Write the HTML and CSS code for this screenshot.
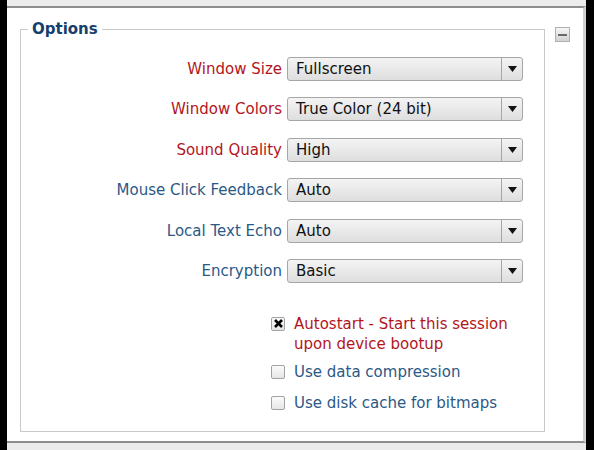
FILE: index.html
```html
<!DOCTYPE html>
<html>
<head>
<meta charset="utf-8">
<link rel="stylesheet" href="styles.css">
</head>
<body>
<div class="frame">
  <div class="topband"></div>
  <div class="main">
    <fieldset class="options">
      <legend>Options</legend>
      <div class="grid">
        <label class="lbl req">Window Size</label>
        <div class="select"><span class="val">Fullscreen</span><span class="arrow"><svg width="9" height="6" viewBox="0 0 9 6"><path d="M0 0H9L4.5 6Z" fill="#111"/></svg></span></div>
        <label class="lbl req">Window Colors</label>
        <div class="select"><span class="val">True Color (24 bit)</span><span class="arrow"><svg width="9" height="6" viewBox="0 0 9 6"><path d="M0 0H9L4.5 6Z" fill="#111"/></svg></span></div>
        <label class="lbl req">Sound Quality</label>
        <div class="select"><span class="val">High</span><span class="arrow"><svg width="9" height="6" viewBox="0 0 9 6"><path d="M0 0H9L4.5 6Z" fill="#111"/></svg></span></div>
        <label class="lbl">Mouse Click Feedback</label>
        <div class="select"><span class="val">Auto</span><span class="arrow"><svg width="9" height="6" viewBox="0 0 9 6"><path d="M0 0H9L4.5 6Z" fill="#111"/></svg></span></div>
        <label class="lbl">Local Text Echo</label>
        <div class="select"><span class="val">Auto</span><span class="arrow"><svg width="9" height="6" viewBox="0 0 9 6"><path d="M0 0H9L4.5 6Z" fill="#111"/></svg></span></div>
        <label class="lbl">Encryption</label>
        <div class="select"><span class="val">Basic</span><span class="arrow"><svg width="9" height="6" viewBox="0 0 9 6"><path d="M0 0H9L4.5 6Z" fill="#111"/></svg></span></div>
      </div>
      <div class="checks">
        <div class="check req first">
          <span class="box"><svg width="11" height="11" viewBox="0 0 11 11"><path d="M2 2L9 9M9 2L2 9" stroke="#000" stroke-width="2.6"/></svg></span>
          <span class="ctext">Autostart - Start this session<br>upon device bootup</span>
        </div>
        <div class="check second">
          <span class="box"></span>
          <span class="ctext">Use data compression</span>
        </div>
        <div class="check third">
          <span class="box"></span>
          <span class="ctext">Use disk cache for bitmaps</span>
        </div>
      </div>
    </fieldset>
    <div class="collapse"><span class="dash"></span></div>
  </div>
  <div class="bottomband"></div>
</div>
</body>
</html>
```

FILE: styles.css
```css
html, body {
  margin: 0;
  padding: 0;
  background: #000;
}
body {
  width: 594px;
  height: 450px;
  overflow: hidden;
  font-family: "DejaVu Sans", sans-serif;
  font-size: 15px;
}
.frame {
  margin-left: 7px;
  width: 579px;
  height: 450px;
  background: #fff;
  display: flex;
  flex-direction: column;
}
.topband {
  height: 6px;
  background: #ececec;
}
.main {
  border-top: 2px solid #8e8e8e;
  border-bottom: 2px solid #8e8e8e;
  border-right: 3px solid #cfcfcf;
  box-sizing: border-box;
  height: 437px;
  display: flex;
  align-items: flex-start;
}
.bottomband {
  flex: 1;
  background: #ececec;
}
.options {
  margin: 12px 0 0 13px;
  width: 525px;
  height: 412px;
  box-sizing: border-box;
  border: 1px solid #c8c8c8;
  padding: 19px 21px 0 0;
}
legend {
  margin-left: 7px;
  padding: 0 4px;
  font-weight: bold;
  font-size: 15px;
  color: #173f6c;
}
.grid {
  display: grid;
  grid-template-columns: 261px 236px;
  column-gap: 5px;
  row-gap: 16.4px;
  align-items: center;
}
.lbl {
  text-align: right;
  color: #2b5986;
  white-space: nowrap;
}
.lbl.req {
  color: #b3151c;
}
.select {
  height: 24px;
  box-sizing: border-box;
  border: 1px solid #a6a6a6;
  border-radius: 3px;
  background: linear-gradient(#f4f4f4, #dedede);
  display: flex;
  align-items: center;
  color: #111;
}
.val {
  flex: 1;
  padding-left: 8px;
}
.arrow {
  width: 20px;
  height: 100%;
  border-left: 1px solid #a6a6a6;
  display: flex;
  align-items: center;
  justify-content: center;
}
.checks {
  margin-top: 31px;
  padding-left: 250px;
  display: flex;
  flex-direction: column;
}
.check {
  display: flex;
  align-items: flex-start;
  color: #2b5986;
  line-height: 20px;
}
.check.second {
  margin-top: 8px;
}
.check.third {
  margin-top: 11px;
}
.check.req {
  color: #b3151c;
}
.box {
  width: 14px;
  height: 14px;
  margin-top: 3px;
  margin-right: 9px;
  box-sizing: border-box;
  border: 1px solid #a2a2a2;
  border-radius: 2px;
  background: linear-gradient(#fbfbfb, #e6e6e6);
  display: flex;
  align-items: center;
  justify-content: center;
  flex: none;
}
.collapse {
  margin: 19px 0 0 10px;
  width: 15px;
  height: 15px;
  box-sizing: border-box;
  border: 1px solid #b0b0b0;
  background: linear-gradient(#f6f6f6, #d2d2d2);
  display: flex;
  align-items: center;
  justify-content: center;
}
.dash {
  width: 9px;
  height: 2px;
  background: #6a6a6a;
}
```
